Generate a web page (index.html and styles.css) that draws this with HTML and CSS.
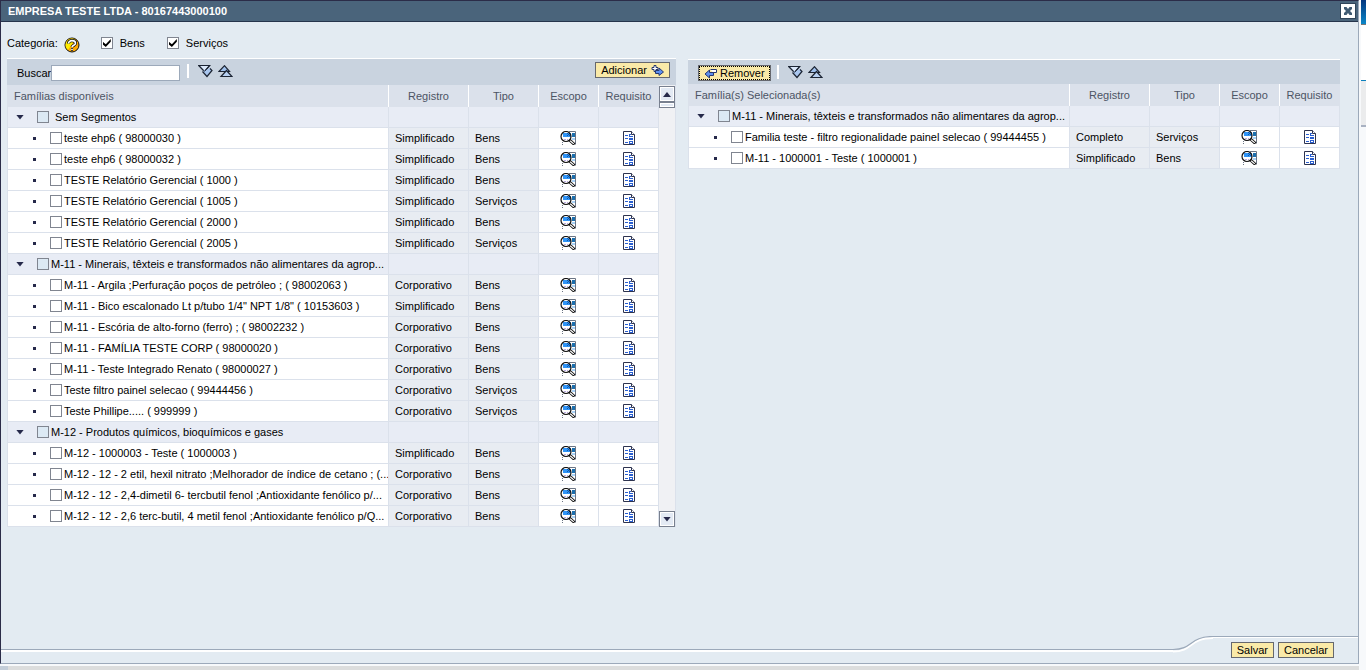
FILE: index.html
```html
<!DOCTYPE html>
<html lang="pt-BR">
<head>
<meta charset="utf-8">
<title>EMPRESA TESTE LTDA - 80167443000100</title>
<link rel="stylesheet" href="styles.css">
</head>
<body>
<svg class="defs" aria-hidden="true">
  <symbol id="scope" viewBox="0 0 16 14">
    <path d="M9 .5h6.500v13" fill="#fff" stroke="#6a7484"/>
    <path d="M12 2h3v4h-3z" fill="#1b6fae"/><path d="M12 7h3v2h-3z" fill="#a9d2f6"/>
    <path d="M2.500 11v3" stroke="#6a7484" stroke-dasharray="1 1"/>
    <circle cx="6" cy="5.500" r="5" fill="#fff"/>
    <path d="M3 2h8v4H3z" fill="#2f94f7"/>
    <path d="M7 2h1v1H7zM9 2h1v1H9zM8 3h1v1H8zM7 4h1v1H7zM9 4h1v1H9z" fill="#1458a8"/>
    <path d="M4 8.500h2M7 8.500h1" stroke="#b9a6dd"/>
    <circle cx="6" cy="5.500" r="5" fill="none" stroke="#111" stroke-width="1.200"/>
    <path d="M9.500 9l5 4.500" stroke="#111" stroke-width="3"/><path d="M10.200 9.700l3.600 3.200" stroke="#fff" stroke-width="1.200"/>
  </symbol>
  <symbol id="form" viewBox="0 0 12 14">
    <path d="M.5.5h8l3 3v10H.5z" fill="#fff" stroke="#2d3350"/>
    <path d="M8.500.5v3h3" fill="#fff" stroke="#2d3350"/>
    <g fill="#2a5fd0" shape-rendering="crispEdges">
      <path d="M2 4h3v1H2zM2 7h3v1H2zM2 11h3v1H2z"/>
      <path fill-rule="evenodd" d="M6 3h2v1H7v1h3v1H6zM6 7h4v2H6zM6 10h4v3H6zM7 11v1h2v-1z"/>
    </g>
  </symbol>
  <symbol id="expand" viewBox="0 0 15 13">
    <path d="M.7.500h11L6.500 6.500z" fill="#dbe8fa" stroke="#1c2433" stroke-width="1.200"/><path d="M5 6L12.500 3l1.500 2.500L9 11.500z" fill="#a9c6ee"/><path d="M12 3.500l2 2L9 11.500 4.500 6.500" fill="none" stroke="#1c2433" stroke-width="1.200"/><path d="M6.500 6.500L11.700.500" stroke="#1c2433"/>
  </symbol>
  <symbol id="collapse" viewBox="0 0 15 13">
    <path d="M1 6.500L6.500.7 11.500 6.500z" fill="#9fc0ec" stroke="#1c2433" stroke-width="1.200"/><path d="M3 11.500L8.500 5.500l5.500 6z" fill="#b7d0f2" stroke="#1c2433" stroke-width="1.200"/>
  </symbol>
</svg>

<main class="dialog">
  <header class="title">
    <h1>EMPRESA TESTE LTDA - 80167443000100</h1>
    <button class="close" aria-label="Fechar"><svg viewBox="0 0 10 10" width="10" height="10"><path d="M1 1h2.500L5 3l1.500-2H9v2L7 5l2 2v2H6.500L5 7 3.500 9H1V7l2-2-2-2z" fill="#405b73"/></svg></button>
  </header>

  <div class="filter">
    <span>Categoria:</span>
    <svg class="help" viewBox="0 0 16 16" role="img" aria-label="Ajuda">
      <circle cx="8" cy="8" r="7" fill="#ffa800" stroke="#111"/>
      <path d="M8 1.500a6.500 6.500 0 0 0-4 11.500L11 2.300A6.500 6.500 0 0 0 8 1.500z" fill="#ffee00"/>
      <path d="M4.500 6.500C4.500 2.500 11.500 3 11.500 6.200c0 2-3 2-3.500 3.800M7 12.500h2" fill="none" stroke="#111" stroke-width="3.200"/>
      <path d="M4.500 6.500C4.500 2.500 11.500 3 11.500 6.200c0 2-3 2-3.500 3.800M7.200 12.500h1.600" fill="none" stroke="#fff" stroke-width="1.600"/>
    </svg>
    <label class="option"><input type="checkbox" checked>Bens</label>
    <label class="option"><input type="checkbox" checked>Serviços</label>
  </div>

  <div class="panels">
    <section class="panel available">
      <div class="toolbar">
        <label for="busca">Buscar</label><input id="busca" class="search" type="text">
        <span class="divider"></span>
        <button class="icon" aria-label="Expandir tudo"><svg><use href="#expand"/></svg></button>
        <button class="icon" aria-label="Recolher tudo"><svg><use href="#collapse"/></svg></button>
        <button class="action add">Adicionar <svg viewBox="0 0 13 11" width="13" height="11"><path d="M3 .5h2v2h2v2H5v2H3v-2H1v-2h2z" fill="#fff" stroke="#27386e"/><path d="M4.500 5.500H8V3l4.500 4L8 10.500V8.500H4.500z" fill="#5d8ff0" stroke="#27386e"/></svg></button>
      </div>
      <div class="grid">
        <table>
          <colgroup><col><col class="w80"><col class="w70"><col class="w60"><col class="w60"></colgroup>
          <thead><tr><th>Famílias disponíveis</th><th>Registro</th><th>Tipo</th><th>Escopo</th><th>Requisito</th></tr></thead>
          <tbody id="available"></tbody>
        </table>
        <div class="scroll">
          <button aria-label="Rolar para cima"><i class="up"></i></button>
          <div class="thumb"></div>
          <button class="end" aria-label="Rolar para baixo"><i class="down"></i></button>
        </div>
      </div>
    </section>

    <section class="panel selected">
      <div class="toolbar">
        <button class="action remove"><svg viewBox="0 0 13 11" width="13" height="11"><path d="M6.500 1.500h6v3H9" fill="#fff" stroke="#27386e"/><path d="M9.500 4.500H5.500V2L1 6l4.500 4V7.500h4z" fill="#5d8ff0" stroke="#27386e"/></svg> Remover</button>
        <span class="divider"></span>
        <button class="icon" aria-label="Expandir tudo"><svg><use href="#expand"/></svg></button>
        <button class="icon" aria-label="Recolher tudo"><svg><use href="#collapse"/></svg></button>
      </div>
      <div class="grid">
        <table>
          <colgroup><col><col class="w80"><col class="w70"><col class="w60"><col class="w60"></colgroup>
          <thead><tr><th>Família(s) Selecionada(s)</th><th>Registro</th><th>Tipo</th><th>Escopo</th><th>Requisito</th></tr></thead>
          <tbody id="selected"></tbody>
        </table>
      </div>
    </section>
  </div>

  <footer class="footer">
    <div class="line"></div>
    <svg class="curve" viewBox="0 0 40 17" width="40" height="17"><path d="M0 15.500c20 0 16-13.500 40-13.500" fill="none" stroke="#fff" stroke-width="2"/><path d="M0 13.500c20 0 16-13 40-13" fill="none" stroke="#9ca9ba" stroke-width="1.200"/></svg>
    <div class="buttons"><button class="action">Salvar</button><button class="action">Cancelar</button></div>
  </footer>
</main>
<aside class="backdrop-side"><div class="brand"></div><div class="tab"></div><div class="pane"></div></aside>
<div class="backdrop-bottom"></div>
<script src="rows.js"></script>
</body>
</html>
```
FILE: rows.js
```js
const S = 'Simplificado', C = 'Corporativo';
const available = [
  ['Sem Segmentos'],
  ['teste ehp6 ( 98000030 )', S, 'Bens'],
  ['teste ehp6 ( 98000032 )', S, 'Bens'],
  ['TESTE Relatório Gerencial ( 1000 )', S, 'Bens'],
  ['TESTE Relatório Gerencial ( 1005 )', S, 'Serviços'],
  ['TESTE Relatório Gerencial ( 2000 )', S, 'Bens'],
  ['TESTE Relatório Gerencial ( 2005 )', S, 'Serviços'],
  ['M-11 - Minerais, têxteis e transformados não alimentares da agrop...'],
  ['M-11 - Argila ;Perfuração poços de petróleo ; ( 98002063 )', C, 'Bens'],
  ['M-11 - Bico escalonado Lt p/tubo 1/4" NPT 1/8" ( 10153603 )', S, 'Bens'],
  ['M-11 - Escória de alto-forno (ferro) ; ( 98002232 )', C, 'Bens'],
  ['M-11 - FAMÍLIA TESTE CORP ( 98000020 )', C, 'Bens'],
  ['M-11 - Teste Integrado Renato ( 98000027 )', C, 'Bens'],
  ['Teste filtro painel selecao ( 99444456 )', C, 'Serviços'],
  ['Teste Phillipe..... ( 999999 )', C, 'Serviços'],
  ['M-12 - Produtos químicos, bioquímicos e gases'],
  ['M-12 - 1000003 - Teste ( 1000003 )', S, 'Bens'],
  ['M-12 - 12 - 2 etil, hexil nitrato ;Melhorador de índice de cetano ; (...', C, 'Bens'],
  ['M-12 - 12 - 2,4-dimetil 6- tercbutil fenol ;Antioxidante fenólico p/...', C, 'Bens'],
  ['M-12 - 12 - 2,6 terc-butil, 4 metil fenol ;Antioxidante fenólico p/Q...', C, 'Bens']
];
const selected = [
  ['M-11 - Minerais, têxteis e transformados não alimentares da agrop...'],
  ['Familia teste - filtro regionalidade painel selecao ( 99444455 )', 'Completo', 'Serviços'],
  ['M-11 - 1000001 - Teste ( 1000001 )', S, 'Bens']
];

function row([name, registro, tipo]) {
  if (!registro) {
    const spacing = name === 'Sem Segmentos' ? ' class="unsegmented"' : '';
    return `<tr class="group"><td><div class="tree"><button class="toggle" aria-label="Recolher"></button>
      <label${spacing}><input type="checkbox">${name}</label></div></td><td></td><td></td><td></td><td></td></tr>`;
  }
  return `<tr class="leaf"><td><div class="tree"><span class="bullet"></span>
    <label><input type="checkbox">${name}</label></div></td><td>${registro}</td><td>${tipo}</td>
    <td><a href="#escopo" aria-label="Escopo"><svg class="scope"><use href="#scope"/></svg></a></td>
    <td><a href="#requisito" aria-label="Requisito"><svg class="form"><use href="#form"/></svg></a></td></tr>`;
}
document.getElementById('available').innerHTML = available.map(row).join('');
document.getElementById('selected').innerHTML = selected.map(row).join('');
```
FILE: styles.css
```css
* { box-sizing: border-box; }
body {
  margin: 0;
  min-height: 100vh;
  display: grid;
  grid-template-columns: 1fr 7px;
  grid-template-rows: 1fr 6px;
  background: #f7f9fb;
  color: #000;
  font: 11px/14px "Liberation Sans", Arial, sans-serif;
}
button, input { font: inherit; color: inherit; margin: 0; padding: 0; }
button { border: 0; background: none; }
svg { display: block; }
.defs { position: absolute; width: 0; height: 0; }

.dialog {
  display: flex;
  flex-direction: column;
  min-width: 0;
  background: #e3ebf2;
  border: 1px solid #9ca9ba;
  border-top-color: #2b2c48;
  border-left-color: #2b2c48;
}
.title {
  display: flex;
  align-items: center;
  justify-content: space-between;
  height: 21px;
  padding: 0 2px 0 7px;
  background: #4a647b;
  border-bottom: 1px solid #26344c;
}
.title h1 { margin: 0; font-size: 11px; color: #fff; }
.close {
  display: grid;
  place-items: center;
  width: 16px;
  height: 16px;
  background: #fff;
  border: 1px solid #2f4459;
}

.filter { display: flex; align-items: center; height: 36px; padding: 6px 6px 0; }
.help { width: 16px; height: 16px; margin: 4px 21px 0 6px; }
.option { display: flex; align-items: center; gap: 7px; margin-right: 22px; }

input[type="checkbox"] {
  appearance: none;
  flex: none;
  width: 12px;
  height: 12px;
  border: 1px solid #808590;
  background: #fff;
}
input[type="checkbox"]:checked::before {
  content: "";
  display: block;
  width: 8px;
  height: 8px;
  margin: 1px;
  background: #000;
  clip-path: polygon(0 35%, 38% 65%, 100% 0, 100% 35%, 38% 100%, 0 70%);
}

.panels { display: flex; gap: 12px; flex: 1; align-items: flex-start; padding: 0 18px 20px 6px; }
.panel { border-top: 1px solid #fff; min-width: 0; }
.available { flex: 669 1 0; }
.selected { flex: 652 1 0; margin-top: 1px; }
.toolbar { display: flex; align-items: flex-start; height: 26px; padding: 3px 6px 0 10px; background: #c9d3df; }
.selected .toolbar { height: 24px; padding-top: 5px; }
.toolbar label { margin-top: 4px; }
.search { width: 129px; height: 16px; margin-top: 3px; padding: 0 2px; background: #fff; border: 1px solid #9ca9ba; }
.divider { width: 2px; height: 14px; margin: 2px 9px 0 7px; background: #fff; }
.selected .divider { margin: 0 9px 0 6px; }
.icon { width: 15px; height: 13px; margin: 3px 5px 0 0; }
.selected .icon { margin-top: 1px; }
.icon svg { width: 15px; height: 13px; }
.action {
  display: flex;
  align-items: center;
  gap: 4px;
  height: 16px;
  padding: 0 5px;
  background: #faeaa8;
  border: 1px solid #66686e;
}
.add { margin-left: auto; }
.remove { gap: 3px; outline: 1px dotted #000; outline-offset: -2px; }

.grid { display: flex; border-left: 1px solid #dbe1eb; background: #dbe1eb; }
table { flex: 1; width: 100%; min-width: 0; table-layout: fixed; border-collapse: separate; border-spacing: 0; }
.w80 { width: 80px; }
.w70 { width: 70px; }
.w60 { width: 60px; }
th { height: 22px; padding: 0; font-weight: normal; color: #4c5464; background: #dbe1eb; border-right: 1px solid #fff; }
th:first-child { text-align: left; padding-left: 6px; }
th:last-child { border-right-color: #dbe1eb; }
td {
  height: 21px;
  padding: 0 0 0 6px;
  background: #e8ecf2;
  border-right: 1px solid #dbe1eb;
  border-bottom: 1px solid #dbe1eb;
  white-space: nowrap;
}
td:first-child { padding: 0; overflow: hidden; }
.group td { background: #e8ecf5; }
.leaf td:first-child, .leaf td:nth-child(n+4) { background: #fff; }
td:nth-child(n+4) { padding: 0; }
td:nth-child(4) a { padding-right: 2px; }
td a { display: flex; justify-content: center; }
.scope { width: 16px; height: 14px; }
.form { width: 12px; height: 14px; }
.tree { display: flex; align-items: center; }
.tree label { display: flex; flex: none; align-items: center; gap: 2px; }
.tree .unsegmented { gap: 6px; }
.toggle, .up, .down { width: 8px; height: 5px; background: #26294a; clip-path: polygon(0 0, 100% 0, 50% 100%); }
.toggle { flex: none; margin: 0 13px 0 8px; }
.group input[type="checkbox"] { background: #dce9f4; }
.bullet { flex: none; width: 3px; height: 3px; margin: 0 14px 0 25px; background: #26294a; }

.scroll { flex: none; display: flex; flex-direction: column; width: 17px; padding-top: 1px; background: #f0f1f4; border-right: 1px solid #dbe1eb; }
.scroll button, .thumb { width: 16px; background: #e3eaf4; border: 1px solid #78808f; box-shadow: inset 0 0 0 1px #fff; }
.scroll button { display: grid; place-items: center; height: 16px; }
.thumb { height: 6px; }
.up { transform: rotate(180deg); }
.end { margin-top: auto; }

.footer { display: flex; align-items: flex-start; height: 27px; }
.line { flex: 1; height: 14px; border-bottom: 1px solid #9ca9ba; box-shadow: 0 2px #fff; }
.buttons { display: flex; gap: 4px; padding: 5px 24px 0 18px; border-top: 1px solid #9ca9ba; box-shadow: inset 0 1px #fff; }

.backdrop-side { display: flex; flex-direction: column; padding-left: 2px; grid-row: 1 / 3; grid-column: 2; }
.brand { height: 25px; background: linear-gradient(#04367e, #0a86c8); border-bottom: 1px solid #777; }
.tab { height: 56px; background: #fff; border-bottom: 1px solid #0a80bd; }
.pane { height: 46px; background: #ebeced; border-bottom: 2px solid #a9b2c2; }
.backdrop-bottom { margin-top: 2px; background: linear-gradient(90deg, #c3cdd8 8px, #dcdddd 8px); }
```
